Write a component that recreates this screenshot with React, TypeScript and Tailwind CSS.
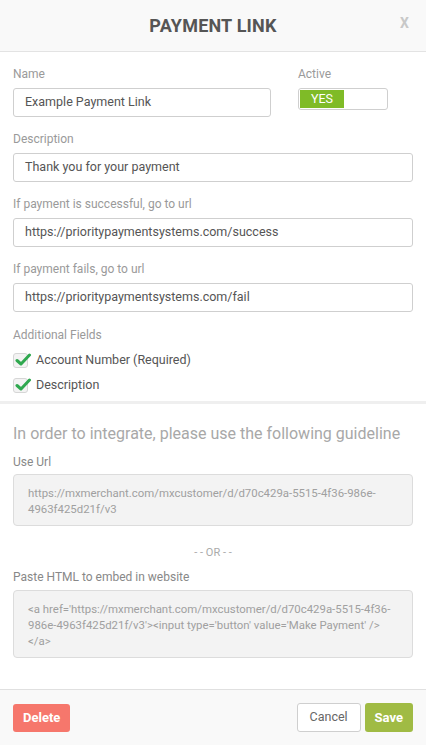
import React from "react";

function Label({ children, className = "" }: { children: React.ReactNode; className?: string }) {
  return <div className={`text-[12px] leading-[14px] text-[#9a9a9a] ${className}`}>{children}</div>;
}

function Input({ value, className = "" }: { value: string; className?: string }) {
  return (
    <div className={`h-[29px] border border-[#cfcfcf] rounded-[3px] bg-white flex items-center pl-[11px] text-[12.5px] text-[#555] ${className}`}>
      {value}
    </div>
  );
}

function Check({ label }: { label: string }) {
  return (
    <div className="flex items-center h-[25px]">
      <div className="relative w-[15px] h-[15px] border border-[#d6d6d6] rounded-[3px] bg-[#f3f3f3]">
        <svg className="absolute left-[1px] top-[-2px]" width="17" height="15" viewBox="0 0 17 15">
          <path d="M2 8.5 L6 12 L14.5 3" fill="none" stroke="#2fa84f" strokeWidth="3" strokeLinecap="round" strokeLinejoin="round" />
        </svg>
      </div>
      <span className="ml-[8px] text-[12.5px] text-[#555]">{label}</span>
    </div>
  );
}

export default function App() {
  return (
    <div className="w-[426px] h-[745px] bg-white flex flex-col" style={{ fontFamily: "Roboto, 'Noto Sans', sans-serif" }}>
      <div className="h-[52px] bg-[#f9f9f9] border-b border-[#e3e3e3] relative flex items-center justify-center">
        <div className="text-[18px] font-bold text-[#555] tracking-[0.2px]">PAYMENT LINK</div>
        <div className="absolute right-[17px] top-[13px] text-[14px] font-bold text-[#c8c8c8]">X</div>
      </div>

      <div className="px-[13px] pt-[15px]">
        <div className="flex">
          <div className="w-[258px]">
            <Label>Name</Label>
            <Input value="Example Payment Link" className="mt-[7px]" />
          </div>
          <div className="ml-[27px]">
            <Label>Active</Label>
            <div className="mt-[7px] w-[90px] h-[22px] border border-[#cfcfcf] rounded-[3px] bg-white flex p-[1px]">
              <div className="w-[44px] h-full bg-[#7fbb27] text-white text-[12.5px] flex items-center justify-center">YES</div>
            </div>
          </div>
        </div>

        <Label className="mt-[15px]">Description</Label>
        <Input value="Thank you for your payment" className="mt-[7px]" />

        <Label className="mt-[15px]">If payment is successful, go to url</Label>
        <Input value="https://prioritypaymentsystems.com/success" className="mt-[7px]" />

        <Label className="mt-[15px]">If payment fails, go to url</Label>
        <Input value="https://prioritypaymentsystems.com/fail" className="mt-[7px]" />

        <Label className="mt-[16px]">Additional Fields</Label>
        <div className="mt-[6px]">
          <Check label="Account Number (Required)" />
          <Check label="Description" />
        </div>
      </div>

      <div className="mt-[3px] h-[3px] bg-[#efefef]" />

      <div className="px-[13px]">
        <div className="mt-[19px] text-[16px] leading-[22px] text-[#a8a8a8]">In order to integrate, please use the following guideline</div>
        <div className="mt-[10px] text-[12px] leading-[14px] text-[#888]">Use Url</div>
        <div className="mt-[5px] h-[52px] bg-[#f3f3f3] border border-[#dcdcdc] rounded-[4px] px-[14px] pt-[10px] text-[11.4px] leading-[16px] text-[#a0a0a0]">
          https://mxmerchant.com/mxcustomer/d/d70c429a-5515-4f36-986e-4963f425d21f/v3
        </div>
        <div className="mt-[20px] text-center text-[11px] leading-[14px] text-[#aaa]">- - OR - -</div>
        <div className="mt-[10px] text-[12px] leading-[14px] text-[#888]">Paste HTML to embed in website</div>
        <div className="mt-[6px] h-[68px] bg-[#f3f3f3] border border-[#dcdcdc] rounded-[4px] px-[14px] pt-[10px] text-[11.4px] leading-[16px] text-[#a0a0a0] whitespace-nowrap">
          {"<a href='https://mxmerchant.com/mxcustomer/d/d70c429a-5515-4f36-"}
          <br />
          {"986e-4963f425d21f/v3'><input type='button' value='Make Payment' />"}
          <br />
          {"</a>"}
        </div>
      </div>

      <div className="flex-1" />
      <div className="h-[56px] bg-[#f9f9f9] border-t border-[#e0e0e0] flex items-center px-[13px]">
        <div className="h-[28px] px-[10px] bg-[#f6776c] rounded-[3px] text-white text-[13px] font-bold flex items-center">Delete</div>
        <div className="flex-1" />
        <div className="h-[29px] px-[12px] bg-white border border-[#cfcfcf] rounded-[3px] text-[#666] text-[12.5px] flex items-center">Cancel</div>
        <div className="ml-[4px] h-[29px] px-[10px] bg-[#a0bb44] rounded-[3px] text-white text-[13px] font-bold flex items-center">Save</div>
      </div>
    </div>
  );
}
